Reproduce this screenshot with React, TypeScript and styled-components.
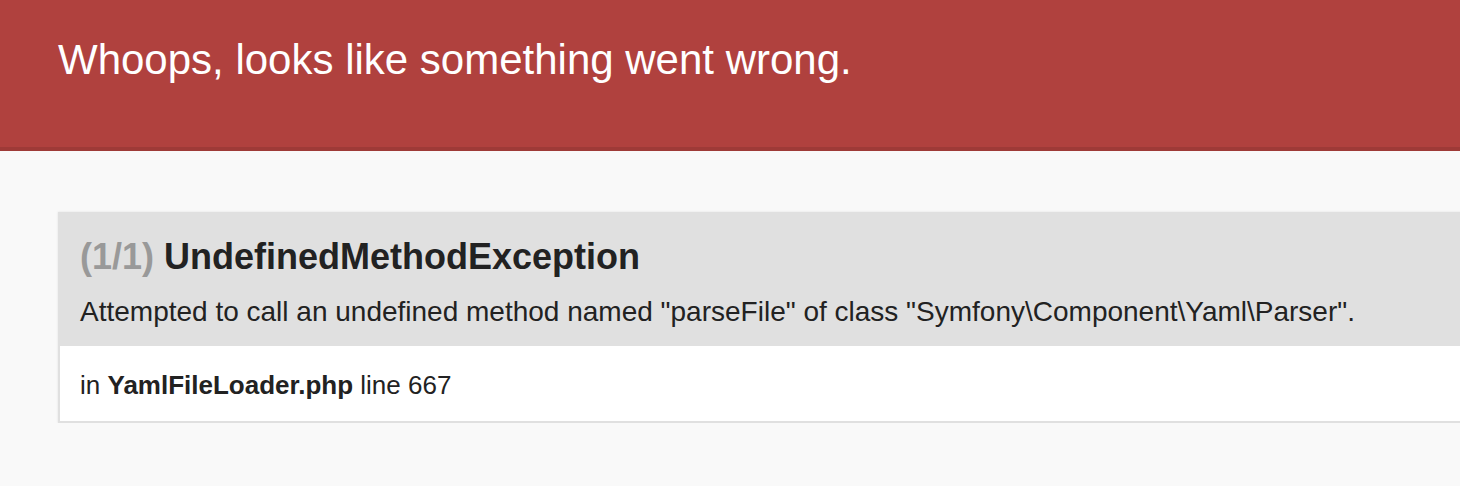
import styled, { createGlobalStyle } from 'styled-components'

const GlobalStyle = createGlobalStyle`
	html,
	body {
		margin: 0;
		padding: 0;
		background: #f9f9f9;
		overflow: hidden;
	}

	body {
		color: #222;
		font: 28px/1.4 'Liberation Sans', Arial, Helvetica, sans-serif;
	}
`

const Summary = styled.header`
	background: #b0413e;
	border-bottom: 4px solid rgba(0, 0, 0, 0.1);
	height: 151px;
	box-sizing: border-box;
	margin-bottom: 61px;
`

const Container = styled.div`
	padding: 0 0 0 58px;
`

const Message = styled.h1`
	margin: 0;
	padding-top: 31px;
	color: #fff;
	font-size: 42px;
	font-weight: 400;
	line-height: 58.8px;
`

const Trace = styled.section`
	background: #fff;
	border: 2px solid #e0e0e0;
	box-shadow: 0 0 2px rgba(128, 128, 128, 0.2);
	margin-right: -60px;
`

const TraceHead = styled.div`
	background-color: #e0e0e0;
	padding: 20px 20px 17px;
`

const TraceClass = styled.h2`
	margin: 0;
	color: #222;
	font-size: 36px;
	font-weight: bold;
	line-height: 1.3;
`

const Counter = styled.span`
	color: #999;
`

const TraceMessage = styled.p`
	margin: 14px 0 0;
	font-size: 28px;
	font-weight: normal;
	line-height: 34px;
`

const TraceFile = styled.div`
	padding: 24px 20px 21px;
	font-size: 26px;
	line-height: 30px;

	strong {
		font-weight: bold;
	}
`

export default function App() {
	return (
		<>
			<GlobalStyle />
			<Summary>
				<Container>
					<Message>Whoops, looks like something went wrong.</Message>
				</Container>
			</Summary>
			<Container>
				<Trace>
					<TraceHead>
						<TraceClass>
							<Counter>(1/1)</Counter> UndefinedMethodException
						</TraceClass>
						<TraceMessage>
							Attempted to call an undefined method named "parseFile" of class
							"Symfony\Component\Yaml\Parser".
						</TraceMessage>
					</TraceHead>
					<TraceFile>
						in <strong>YamlFileLoader.php</strong> line 667
					</TraceFile>
				</Trace>
			</Container>
		</>
	)
}
